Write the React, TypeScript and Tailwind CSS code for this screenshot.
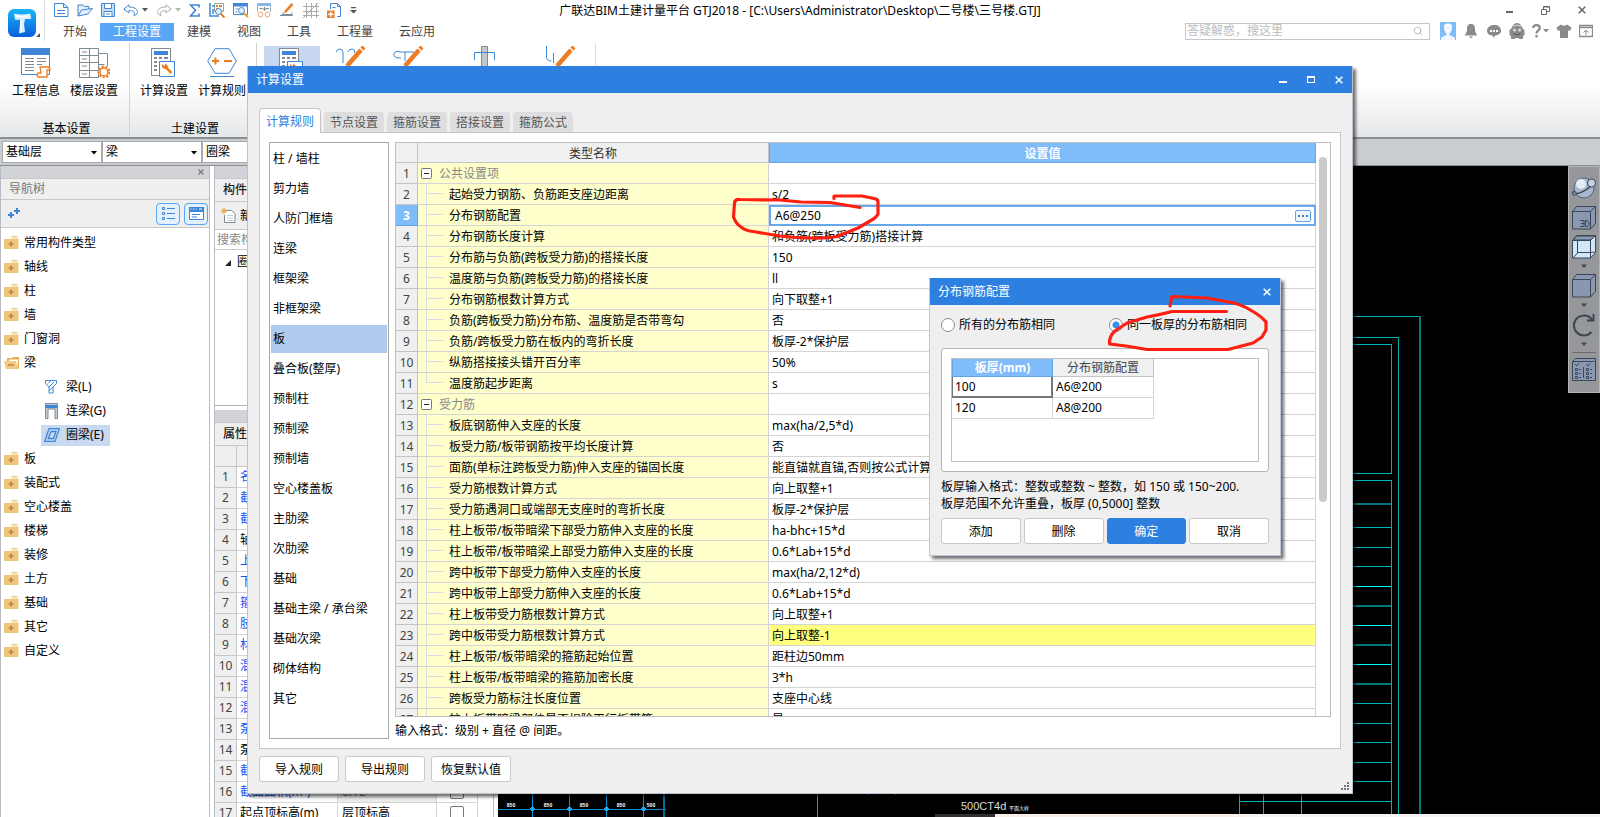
import React from 'react';
import { Search } from 'lucide-react';

const BLUE = '#3f86d6';
const ORANGE = '#ee7c22';
const GRAY = '#7f8a93';

const menuTabs = ['开始', '工程设置', '建模', '视图', '工具', '工程量', '云应用'];

const navTop = ['常用构件类型', '轴线', '柱', '墙', '门窗洞'];
const navBottom = ['板', '装配式', '空心楼盖', '楼梯', '装修', '土方', '基础', '其它', '自定义'];

const properties: { name: string; value?: string; dark?: boolean }[] = [
  { name: '名称', value: 'QL-1' },
  { name: '截面宽度(mm)', value: '240' },
  { name: '截面高度(mm)', value: '240' },
  { name: '轴线距梁左边...', value: '(120)', dark: true },
  { name: '上部钢筋', value: '2A12' },
  { name: '下部钢筋', value: '2A12' },
  { name: '箍筋', value: 'A6@200' },
  { name: '肢数', value: '2' },
  { name: '材质', value: '现浇混凝土' },
  { name: '混凝土类型' },
  { name: '混凝土强度等级' },
  { name: '混凝土外加剂' },
  { name: '泵送类型' },
  { name: '泵送高度(m)', dark: true },
  { name: '截面周长(m)', value: '1.4' },
  { name: '截面面积(m²)', value: '0.12' },
  { name: '起点顶标高(m)', value: '层顶标高', dark: true },
];

const categories = [
  '柱 / 墙柱', '剪力墙', '人防门框墙', '连梁', '框架梁', '非框架梁', '板', '叠合板(整厚)', '预制柱', '预制梁',
  '预制墙', '空心楼盖板', '主肋梁', '次肋梁', '基础', '基础主梁 / 承台梁', '基础次梁', '砌体结构', '其它',
];

const dialogTabs = ['计算规则', '节点设置', '箍筋设置', '搭接设置', '箍筋公式'];

interface Rule {
  name: string;
  value?: string;
  group?: boolean;
  last?: boolean;
}

const rules: Rule[] = [
  { name: '公共设置项', group: true },
  { name: '起始受力钢筋、负筋距支座边距离', value: 's/2' },
  { name: '分布钢筋配置', value: 'A6@250' },
  { name: '分布钢筋长度计算', value: '和负筋(跨板受力筋)搭接计算' },
  { name: '分布筋与负筋(跨板受力筋)的搭接长度', value: '150' },
  { name: '温度筋与负筋(跨板受力筋)的搭接长度', value: 'll' },
  { name: '分布钢筋根数计算方式', value: '向下取整+1' },
  { name: '负筋(跨板受力筋)分布筋、温度筋是否带弯勾', value: '否' },
  { name: '负筋/跨板受力筋在板内的弯折长度', value: '板厚-2*保护层' },
  { name: '纵筋搭接接头错开百分率', value: '50%' },
  { name: '温度筋起步距离', value: 's', last: true },
  { name: '受力筋', group: true },
  { name: '板底钢筋伸入支座的长度', value: 'max(ha/2,5*d)' },
  { name: '板受力筋/板带钢筋按平均长度计算', value: '否' },
  { name: '面筋(单标注跨板受力筋)伸入支座的锚固长度', value: '能直锚就直锚,否则按公式计算' },
  { name: '受力筋根数计算方式', value: '向上取整+1' },
  { name: '受力筋遇洞口或端部无支座时的弯折长度', value: '板厚-2*保护层' },
  { name: '柱上板带/板带暗梁下部受力筋伸入支座的长度', value: 'ha-bhc+15*d' },
  { name: '柱上板带/板带暗梁上部受力筋伸入支座的长度', value: '0.6*Lab+15*d' },
  { name: '跨中板带下部受力筋伸入支座的长度', value: 'max(ha/2,12*d)' },
  { name: '跨中板带上部受力筋伸入支座的长度', value: '0.6*Lab+15*d' },
  { name: '柱上板带受力筋根数计算方式', value: '向上取整+1' },
  { name: '跨中板带受力筋根数计算方式', value: '向上取整-1' },
  { name: '柱上板带/板带暗梁的箍筋起始位置', value: '距柱边50mm' },
  { name: '柱上板带/板带暗梁的箍筋加密长度', value: '3*h' },
  { name: '跨板受力筋标注长度位置', value: '支座中心线' },
  { name: '柱上板带暗梁部位是否扣除平行板带筋', value: '是' },
];

const EDITING_ROW = 2;
const CHANGED_ROW = 22;

const Caret = ({ className = 'text-[#555]' }: { className?: string }) => (
  <svg width="6" height="4" viewBox="0 0 6 4" className={`shrink-0 ${className}`}>
    <path d="M0 0h6L3 3.5z" fill="currentColor" />
  </svg>
);

const Cross = ({ size = 8, width = 1.5 }: { size?: number; width?: number }) => (
  <svg width={size} height={size} viewBox="0 0 8 8">
    <path d="M.7.7l6.6 6.6M7.3.7L.7 7.3" stroke="currentColor" strokeWidth={width} />
  </svg>
);

const AppLogo = () => (
  <svg width="28" height="28" viewBox="0 0 28 28">
    <defs>
      <linearGradient id="logo" x1="0" y1="0" x2="0" y2="1">
        <stop offset="0" stopColor="#18b4fa" />
        <stop offset="1" stopColor="#0a5fd8" />
      </linearGradient>
    </defs>
    <rect width="28" height="28" rx="6" fill="url(#logo)" />
    <path d="M6 4.500q8 2 16 0l1.500 5q-3.500.8-6.500.5l-1 5 1 8-6 1.500 1-9V10.500q-3 .5-5 0z" fill="#d9f0ff" />
    <path d="M8 7q6 1.500 12 0M13 12v10" stroke="#fff" strokeWidth="1.500" fill="none" />
  </svg>
);

const QuickIcons = () => (
  <div className="flex w-[320px] shrink-0 items-center pb-0.5 pl-[9px]">
    <div className="flex items-center gap-2">
      <svg width="15" height="14" viewBox="0 0 15 14" fill="none" stroke={BLUE}>
        <path d="M.5.5h9l4.500 4v9H.5zM9.500.5v4H14M3 7.500h8M3 10.500h8" />
      </svg>
      <svg width="16" height="14" viewBox="0 0 16 14" fill="#e3effb" stroke={BLUE}>
        <path d="M1 13V2h5l1.500 1.500H12V6M1 13l3.500-6 11-1.500L11 11z" />
      </svg>
      <svg width="14" height="14" viewBox="0 0 14 14" fill="#c8e0f8" stroke={BLUE}>
        <path d="M.5.5h13v13H.5z" />
        <path d="M3.500.5h7v5h-7zM3 8.500h8v5H3zM5 11h4" fill="#fff" />
      </svg>
      <div className="flex items-center gap-[3px]">
        <svg width="16" height="13" viewBox="0 0 16 13" fill="none" stroke={BLUE}>
          <path d="M6 .8L.8 5 6 9V6.500c4 0 6.500 1 5 5.500 6-3 4-9-5-9z" />
        </svg>
        <Caret />
      </div>
      <div className="flex items-center gap-[3px]">
        <svg width="16" height="13" viewBox="0 0 16 13" fill="none" stroke="#aaa">
          <path d="M10 .8L15.200 5 10 9V6.500c-4 0-6.500 1-5 5.500-6-3-4-9 5-9z" />
        </svg>
        <Caret className="text-[#b5b5b5]" />
      </div>
      <svg width="12" height="13" viewBox="1 0 12 13" fill="none" stroke={BLUE} strokeWidth="1.600">
        <path d="M11 3.500V1H2.500l5 5.300L2.500 12H11V9.500" />
      </svg>
      <svg width="16" height="15" viewBox="0 0 16 15" fill="none">
        <path d="M1 0v13h9M4 11V6M4 2v2" stroke={BLUE} strokeWidth="1.500" />
        <path d="M5.500.5h9v8h-9z" stroke="#8aa" />
        <path d="M7 2h2v2H7zM10 2h3v2h-3zM7 5h2v2H7z" fill={ORANGE} />
        <circle cx="9.500" cy="8.500" r="3" fill="#eaf3fc" stroke={BLUE} />
        <path d="M11.500 10.500l4 4" stroke={ORANGE} strokeWidth="2" />
      </svg>
      <svg width="16" height="15" viewBox="0 0 16 15" fill="none">
        <path d="M.5.5h14v11H.5z" stroke={BLUE} />
        <path d="M0 0h15v3.500H0z" fill={BLUE} />
        <path d="M2.500 6h3M2.500 9h2" stroke={GRAY} />
        <circle cx="8.500" cy="7.500" r="3" fill="#eaf3fc" stroke={BLUE} />
        <path d="M10.500 10l4.500 4" stroke="#f0a030" strokeWidth="2.200" />
      </svg>
      <svg width="15" height="15" viewBox="0 0 15 15" fill="none">
        <path d="M.5 9V.5h13V9" stroke="#9db3c8" />
        <path d="M0 0h14v3H0z" fill="#8bb7e6" />
        <path d="M2.500 5.500h3M9 5.500h3M7.500 4v4M5.500 6h4" stroke={GRAY} />
        <circle cx="3.500" cy="11.500" r="2.400" stroke="#f0a070" />
        <circle cx="10.500" cy="11.500" r="2.400" stroke="#f0a070" />
      </svg>
      <svg width="15" height="14" viewBox="0 0 15 14" fill="none">
        <path d="M12.500.8L5 9.200" stroke={ORANGE} strokeWidth="2.500" />
        <path d="M4.500 9L2 11.500h10v-2M0 12.500h13" stroke={GRAY} />
      </svg>
      <svg width="16" height="15" viewBox="0 0 16 15" fill="none" stroke="#aaa">
        <path d="M3.500 0v15M8.500 0v15M13.500 0v15M0 3.500h16M0 8.500h16M0 12.500h16M0 15L15 0" />
      </svg>
      <svg width="15" height="15" viewBox="0 0 15 15" fill="none">
        <path d="M3.500 6V.5h7l3 3v10H10M10.500.5v3h3M5.500 4.500h3" stroke={BLUE} />
        <path d="M0 7.500h7.500V15H0z" fill={ORANGE} />
        <path d="M3.800 8.800v5M1.300 11.300h5" stroke="#fff" strokeWidth="1.500" />
      </svg>
      <svg width="7" height="7" viewBox="0 0 7 7" fill="#555">
        <path d="M1 0h5v1.200H1zM0 3h7L3.500 6.500z" />
      </svg>
    </div>
  </div>
);

const AccountIcons = () => (
  <div className="flex items-center gap-[7px] text-[#8a8a8a]">
    <svg width="16" height="18" viewBox="0 0 16 18">
      <path d="M0 0h16v18H0z" fill="#7fbcfa" />
      <path d="M4 3q4-3.500 8 0v4q-1 4-2.500 4.500v1.500L15 15.500V18H1v-2.500l5.500-2.500v-1.500Q5 11 4 7z" fill="#f2f8ff" />
    </svg>
    <svg width="16" height="16" viewBox="0 0 16 16" fill="currentColor">
      <path d="M8 1c3 0 4 2 4 5 0 4 2 5 2 6.500H2C2 11 4 10 4 6c0-3 1-5 4-5zM6 13.500h4L8 15.500z" />
    </svg>
    <svg width="16" height="16" viewBox="0 0 16 16">
      <path d="M8 2c4 0 7 2 7 5.500S12 12 9.500 12.500L7 15v-2.500C3 12.500 1 10.500 1 7.500S4 2 8 2z" fill="currentColor" />
      <path d="M4 7h2v2H4zM7 7h2v2H7zM10 7h2v2h-2z" fill="#fff" />
    </svg>
    <svg width="16" height="17" viewBox="0 0 16 17">
      <path d="M3 4q2-4 5-4t5 4l1 2 1.500 1v5l-1.500 1v3h-4v-1h-4v1H2v-3L.5 12V7L2 6z" fill="currentColor" />
      <path d="M4 3.500q4-3 8 0" stroke="#ddd" fill="none" />
      <circle cx="5.500" cy="7" r="1.500" fill="#ddd" />
      <circle cx="10.500" cy="7" r="1.500" fill="#ddd" />
      <path d="M4.500 10.500q3.500 3 7 0" stroke="#555" fill="none" />
    </svg>
    <span className="flex items-center gap-0.5">
      <svg width="9" height="14" viewBox="0 0 9 14" fill="none" stroke="currentColor" strokeWidth="2.200">
        <path d="M1.200 4Q1.200 1.200 4.500 1.200T7.800 4c0 2.500-3.300 2.500-3.300 5.500M4.500 11v2.500" />
      </svg>
      <Caret className="text-[#8a8a8a]" />
    </span>
    <svg width="16" height="14" viewBox="0 0 16 14" fill="currentColor">
      <path d="M5 .5Q8 3 11 .5l4.500 3L14 7l-2-.8V14H4V6.200L2 7 .5 3.500z" />
    </svg>
    <svg width="14" height="14" viewBox="0 0 14 14" fill="none" stroke="currentColor">
      <path d="M.5 1.500h13v11H.5zM.5 3.500h13" strokeWidth="1.300" />
      <path d="M7 11V6M4.500 8.500L7 6l2.500 2.500" />
    </svg>
  </div>
);

const Header = () => (
  <header className="flex h-[41px] shrink-0 bg-white">
    <div className="relative flex w-[45px] shrink-0 items-center justify-center border-r border-[#ddd] pt-1">
      <AppLogo />
      <svg width="4" height="4" className="absolute right-1 bottom-1">
        <path d="M4 0v4H0z" fill="#555" />
      </svg>
    </div>
    <div className="flex min-w-0 flex-1 flex-col">
      <div className="flex h-[22px] shrink-0">
        <QuickIcons />
        <h1 className="min-w-0 flex-1 truncate pt-[3px] text-center text-xs leading-4 text-black">
          广联达BIM土建计量平台 GTJ2018 - [C:\Users\Administrator\Desktop\二号楼\三号楼.GTJ]
        </h1>
        <div className="flex w-[365px] shrink-0 items-center justify-end gap-7 pr-3.5 pb-0.5 text-[#666]">
          <button aria-label="最小化" className="mt-1 h-0.5 w-[7px] bg-[#666]" />
          <button aria-label="还原">
            <svg width="9" height="9" viewBox="0 0 9 9" fill="none" stroke="currentColor">
              <path d="M.5 3.500h5v5h-5zM2.500 3V.5h6v5H6M2.500 1h6" />
            </svg>
          </button>
          <button aria-label="关闭"><Cross /></button>
        </div>
      </div>
      <nav className="flex flex-1 items-end border-b border-[#d4d4d4] pl-[5px] text-xs leading-4">
        {menuTabs.map((tab) => (
          <button
            key={tab}
            className={`px-[13px] py-px ${tab === '工程设置' ? 'bg-[#5aa5f6] text-white' : 'text-[#444]'}`}
          >
            {tab}
          </button>
        ))}
        <div className="ml-auto flex items-center gap-[10px] pr-[7px] pb-px">
          <label className="flex h-[17px] w-[245px] items-center border border-[#c6c6c6] pr-1.5">
            <input
              aria-label="搜索"
              placeholder="答疑解惑，搜这里"
              className="h-4 min-w-0 flex-1 pb-0.5 pl-px text-xs leading-3 outline-none placeholder:text-[#bbb]"
            />
            <Search className="h-2.5 w-2.5 text-[#b0b0b0]" />
          </label>
          <AccountIcons />
        </div>
      </nav>
    </div>
  </header>
);

const InfoIcon = () => (
  <svg width="30" height="30" viewBox="0 0 30 30" fill="none">
    <path d="M.5.5h28v26H.5z" stroke={BLUE} />
    <path d="M0 0h29v7H0z" fill={BLUE} />
    <path d="M4 10.500h9M16 10.500h9M4 13.500h9M16 13.500h9M4 16.500h9M4 19.500h9M4 22.500h9M16 16.500h5" stroke={GRAY} />
    <path d="M19 19h8q2 0 2 3h-3v7h-9q-2-2 0-4h3z" stroke={ORANGE} strokeWidth="1.300" fill="#fff" />
  </svg>
);

const FloorIcon = () => (
  <svg width="31" height="30" viewBox="0 0 31 30" fill="none" stroke={GRAY}>
    <path d="M.5.5h19v29H.5zM10.500.5v29M.5 7.500h19M.5 14.500h19M.5 22.500h19M19.500 5.500h9V18M19.500 16.500h6" />
    <path d="M3 4h5M3 11h5M3 18h5M3 26h5" />
    <circle cx="25" cy="24" r="5.500" stroke={ORANGE} strokeWidth="2" strokeDasharray="2.300 1.500" fill="#fff" />
    <circle cx="25" cy="24" r="4" stroke={ORANGE} strokeWidth="1.500" fill="#fff" />
  </svg>
);

const CalcIcon = () => (
  <svg width="26" height="30" viewBox="0 0 26 30" fill="none">
    <path d="M.5.500h19v27H.5z" stroke={GRAY} fill="#fff" />
    <path d="M3 3h14v4H3z" fill={BLUE} />
    <path d="M3 9h3v2H3zM8 9h3v2H8zM13 9h4v2h-4zM3 13h3v2H3zM8 13h3v2H8zM3 17h3v2H3zM3 21h3v2H3zM13 13h4v2h-4z" fill={GRAY} />
    <path d="M8.500 13.500h15v15h-15z" stroke={BLUE} fill="#fff" />
    <path d="M14 18.500l6.500 6.500" stroke={ORANGE} strokeWidth="2.500" />
    <path d="M11 16v3l2.500 2h3l.5-3-2.500-2.500-1 2.500z" fill={ORANGE} />
  </svg>
);

const RuleIcon = () => (
  <svg width="30" height="30" viewBox="0 0 30 30" fill="none">
    <path d="M8 .7h14L29.300 13 22 25.300H8L.7 13zM3 28.500h24" stroke={BLUE} />
    <path d="M5 13h7M8.500 9.500v7M17 13h8" stroke={ORANGE} strokeWidth="2" />
  </svg>
);

const Pencil = () => <path d="M11 20L25 4M26 3l2-2" stroke={ORANGE} strokeWidth="4.500" />;

const RibbonButton = ({ label, children }: { label: string; children: React.ReactNode }) => (
  <button className="flex w-14 flex-col items-center gap-1 text-xs leading-[18px] text-black">
    {children}
    <span className="whitespace-nowrap">{label}</span>
  </button>
);

const Ribbon = () => (
  <section className="flex h-[98px] shrink-0 border-b-2 border-[#8c8f92] bg-linear-to-b from-white from-45% to-[#e4e7e9] pt-0.5">
    <div className="flex w-[129px] shrink-0 flex-col justify-between pl-2">
      <div className="flex gap-0.5 pt-[5px]">
        <RibbonButton label="工程信息"><InfoIcon /></RibbonButton>
        <RibbonButton label="楼层设置"><FloorIcon /></RibbonButton>
      </div>
      <span className="pr-1 text-center text-xs leading-4 text-black">基本设置</span>
    </div>
    <div className="flex w-32 shrink-0 flex-col justify-between border-x border-[#d2d2d2] pl-1.5">
      <div className="flex gap-0.5 pt-[5px]">
        <RibbonButton label="计算设置"><CalcIcon /></RibbonButton>
        <RibbonButton label="计算规则"><RuleIcon /></RibbonButton>
      </div>
      <span className="pr-0.5 text-center text-xs leading-4 text-black">土建设置</span>
    </div>
    <div className="mb-0.5 flex w-[339px] shrink-0 gap-4 border-r border-[#dedede] pt-[3px] pl-[7px]">
      <button aria-label="钢筋计算设置" className="flex w-14 justify-center bg-[#c8d8f0] pt-0.5">
        <CalcIcon />
      </button>
      <svg width="30" height="30" viewBox="0 0 30 30" fill="none">
        <path d="M0 6q1-3 4-3t3 4v10M12 6q1-3 4-3t3 4" stroke={BLUE} />
        <Pencil />
      </svg>
      <svg width="56" height="30" viewBox="-12 0 56 30" fill="none">
        <path d="M7 12Q-1 12 0 8t6-2h14M11 6v9" stroke={BLUE} />
        <Pencil />
      </svg>
      <svg width="54" height="30" viewBox="-20 0 54 30" fill="none">
        <path d="M7.500.5h6v28h-6z" fill="#c3c8cc" stroke={GRAY} />
        <path d="M.5 14V6.500h20V14" stroke={BLUE} />
      </svg>
      <svg width="56" height="30" viewBox="-22 0 56 30" fill="none">
        <path d="M.5 0v11q0 4 5 4M7.500 7v10" stroke={BLUE} />
        <Pencil />
      </svg>
    </div>
  </section>
);

const ToolbarSelect = ({ label, value }: { label: string; value: string }) => (
  <div className="relative h-[22px] w-[100px] border border-[#aaa] bg-white">
    <select aria-label={label} className="h-full w-full appearance-none pl-[3px] text-xs leading-4 text-black outline-none">
      <option>{value}</option>
    </select>
    <Caret className="pointer-events-none absolute top-[9px] right-1" />
  </div>
);

const FolderIcon = () => (
  <svg width="15" height="14" viewBox="0 0 15 14">
    <path d="M7 1.500L8.500 0H13l1 1.500zM0 3h7l1-.5h6.500V13H0z" fill="#edc77d" />
    <path d="M7 5.500v5M4.500 8h5" stroke="#bd8534" strokeWidth="1.600" />
  </svg>
);

const NavItem = ({ name, open }: { name: string; open?: boolean }) => (
  <li className="flex h-6 items-center gap-[5px] pl-[3px]">
    {open ? (
      <svg width="15" height="14" viewBox="0 0 15 14">
        <path d="M3 2h5l1-1h6v12H3z" fill="#e2ae58" />
        <path d="M5 3.500h9V9H5z" fill="#fff" />
        <path d="M0 5h12l2.500 8H2z" fill="#efcb87" />
        <path d="M4 9h6" stroke="#bd8534" strokeWidth="1.500" />
      </svg>
    ) : (
      <FolderIcon />
    )}
    {name}
  </li>
);

const NavTree = () => (
  <aside className="flex w-[210px] shrink-0 flex-col border-x border-[#b9bcc4] bg-white">
    <div className="flex h-3 items-center justify-end bg-[#d1d3d9] pr-[5px] text-[#777]">
      <button aria-label="关闭导航树"><Cross size={6} width={1.6} /></button>
    </div>
    <h2 className="h-[22px] border-y border-[#c6c8cc] bg-[#efefef] pl-2 text-xs leading-5 text-[#777]">导航树</h2>
    <div className="flex h-7 items-center border-b border-[#c6c8cc] bg-[#efefef] pr-px pl-[7px]">
      <svg width="12" height="11" viewBox="0 0 12 11" stroke={BLUE} strokeWidth="2">
        <path d="M0 7h6M3 4v6M6 3h6M9 0v6" />
      </svg>
      <div className="ml-auto flex gap-1">
        <button aria-label="列表" className="flex h-[22px] w-6 items-center justify-center rounded-sm border border-[#5aa5f6] bg-[#e3f0fd]">
          <svg width="13" height="14" viewBox="0 0 13 14" fill="none" stroke={BLUE}>
            <path d="M.5.5h2v2h-2zM.5 5.500h2v2h-2zM.5 10.500h2v2h-2zM5 1.500h8M5 6.500h8M5 11.500h8" />
          </svg>
        </button>
        <button aria-label="面板" className="flex h-[22px] w-6 items-center justify-center rounded-sm border border-[#5aa5f6] bg-[#e3f0fd]">
          <svg width="15" height="13" viewBox="0 0 15 13" fill="none">
            <path d="M.5.5h14v12H.5z" fill="#fff" stroke={BLUE} />
            <path d="M0 0h15v5H0z" fill={BLUE} />
            <path d="M2 1.500v1M4.500 1.500v1M7 1.500v1M10 2h3" stroke="#fff" />
            <path d="M3 7.500h8M3 10h5" stroke={BLUE} />
          </svg>
        </button>
      </div>
    </div>
    <ul className="flex-1 overflow-hidden pt-[3px] text-xs text-black">
      {navTop.map((name) => <NavItem key={name} name={name} />)}
      <NavItem name="梁" open />
      <li className="flex h-6 items-center gap-2 pl-[44px]">
        <svg width="13" height="14" viewBox="0 0 13 14" fill="none" stroke={BLUE}>
          <path d="M.5.5h11v3L8 7v6H4V7L.5 3.500zM3 3.500l3-3M4 7l5-5M4 11l4-4" />
        </svg>
        梁(L)
      </li>
      <li className="flex h-6 items-center gap-2 pl-[44px]">
        <svg width="13" height="16" viewBox="0 0 13 16" fill="none">
          <path d="M.5.5h12v15H10V6H3v9.500H.5z" fill="#c5ccd2" stroke={GRAY} />
          <path d="M1 2h11v3H1z" fill={BLUE} />
        </svg>
        连梁(G)
      </li>
      <li className="flex h-6 items-center pl-10">
        <span className="flex h-[21px] items-center gap-1.5 bg-[#c8d9f0] pr-1.5 pl-[3px]">
          <svg width="16" height="14" viewBox="0 0 16 14" fill="none" stroke={BLUE} strokeWidth="1.300">
            <path d="M5 .7h10.300L11 13.300H.7zM7 3.500h5L9.500 10.500H4.200z" />
          </svg>
          圈梁(E)
        </span>
      </li>
      {navBottom.map((name) => <NavItem key={name} name={name} />)}
    </ul>
  </aside>
);

const ComponentPanels = () => (
  <section className="flex w-[280px] shrink-0 flex-col border-x border-[#b9bcc4] bg-white text-xs text-black">
    <div className="h-3 shrink-0 bg-[#d1d3d9]" />
    <h2 className="h-6 shrink-0 border-y border-[#c6c8cc] bg-[#efefef] pl-2 leading-[22px] font-medium text-[#222]">构件列表</h2>
    <div className="flex h-7 shrink-0 items-center gap-1 border-b border-[#c6c8cc] bg-[#efefef] pl-1.5">
      <svg width="15" height="15" viewBox="0 0 15 15" fill="none">
        <path d="M4.500 2.500h6l3.500 3v9H3.500V7" fill="#fff" stroke={GRAY} />
        <path d="M6 7.500h6M6 10h6M6 12.500h6" stroke="#c8ccd0" />
        <path d="M3 0v6M0 3h6M1 1l4 4M5 1L1 5" stroke="#f0a030" />
      </svg>
      新建
    </div>
    <input aria-label="搜索构件" placeholder="搜索构件..." className="h-5 shrink-0 border-b border-[#c6c8cc] pl-0.5 placeholder:text-[#888]" />
    <div className="flex h-[156px] shrink-0 items-start gap-1.5 border-b border-[#b5b5b5] pt-1 pl-2.5 leading-4">
      <svg width="6" height="6" className="mt-1.5"><path d="M6 0v6H0z" fill="#222" /></svg>
      圈梁
    </div>
    <div className="h-1 shrink-0" />
    <div className="h-3 shrink-0 bg-[#d1d3d9]" />
    <h2 className="h-6 shrink-0 border-y border-[#c6c8cc] bg-[#efefef] pl-2 leading-[22px] font-medium text-[#222]">属性列表</h2>
    <div className="min-h-0 flex-1 overflow-hidden">
      <table className="w-[263px] table-fixed border-separate border-spacing-0 leading-4">
        <colgroup>
          <col className="w-[22px]" />
          <col className="w-[101px]" />
          <col className="w-[99px]" />
          <col />
        </colgroup>
        <thead>
          <tr className="bg-[#efefef]">
            {['', '属性名称', '属性值', '附加'].map((head) => (
              <th key={head} className="h-[21px] border-r border-b border-[#c6c6c6] p-0 font-normal">{head}</th>
            ))}
          </tr>
        </thead>
        <tbody>
          {properties.map((prop, i) => (
            <tr key={prop.name}>
              <td className="h-[21px] border-r border-b border-[#c6c6c6] bg-[#efefef] p-0 text-center text-[#444]">{i + 1}</td>
              <td className={`truncate border-r border-b border-[#d4d4d4] p-0 pl-[3px] ${prop.dark ? 'text-black' : 'text-[#1454f0]'}`}>
                {prop.name}
              </td>
              <td className={`border-r border-b border-[#d4d4d4] p-0 pl-1 ${i === 15 ? 'bg-[#ececec] text-[#777]' : ''}`}>{prop.value}</td>
              <td className="border-r border-b border-[#d4d4d4] p-0">
                <input
                  type="checkbox"
                  aria-label={`附加 ${prop.name}`}
                  className="mx-auto block h-3.5 w-3.5 appearance-none rounded-xs border border-[#777] bg-white"
                />
              </td>
            </tr>
          ))}
        </tbody>
      </table>
    </div>
  </section>
);

const gridLines = [
  [338, '#00787a', 2], [361, '#00b4b4', 1], [381, '#00b4b4', 1], [400, '#00b4b4', 1], [420, '#00ffff', 1],
  [440, '#00787a', 2], [459, '#00ffff', 1], [479, '#00787a', 2], [498, '#00ffff', 1], [518, '#00787a', 2],
  [537, '#00b4b4', 1], [557, '#00b4b4', 1], [576, '#00b4b4', 1], [596, '#00b4b4', 1], [615, '#00b4b4', 1],
] as const;

const dimensions = [
  [13, '850'], [50, '850'], [86, '850'], [123, '850'], [153, '500'],
] as const;

const DrawingCanvas = () => (
  <main className="relative min-w-0 flex-1 overflow-hidden bg-black">
    <svg className="h-full w-full" fill="none" shapeRendering="crispEdges">
      <g stroke="#00b4b4">
        <path d="M700 178.500h193.500V308" />
        <path d="M700 171.500h200.500V648" />
        <path d="M700 307.500h193.500M700 314.500h193.500V648" />
        <path d="M741 635.500h152.500M741.500 620v28M765.500 620v28M803.500 620v28" />
      </g>
      <path d="M700 150.500h222" stroke="#00b4b4" />
      <path d="M922 150v498" stroke="#007c7c" strokeWidth="2" />
      {gridLines.map(([y, color, width]) => (
        <path key={y} d={`M700 ${width === 2 ? y : y + 0.5}h193`} stroke={color} strokeWidth={width} />
      ))}
      <path d="M0 643.500h168M34.500 620v31M71.500 620v31M108.500 620v31M145.500 620v31" stroke="#0a8fd0" />
      <path d="M166 620v31" stroke="#0b6a95" strokeWidth="2" />
      <path d="M32 643l2.500-3 2.500 3-2.500 3zM69 643l2.500-3 2.500 3-2.500 3zM106 643l2.500-3 2.500 3-2.500 3zM143 643l2.500-3 2.500 3-2.500 3z" fill="#18a8f0" />
      <path d="M319.500 620v31" stroke="#8c8c00" />
      <path d="M370.500 620v9M397.500 620v9" stroke="#0a8fd0" />
      {dimensions.map(([x, label]) => (
        <text key={x} x={x} y="641" fill="#fff" textAnchor="middle" className="font-['Liberation_Sans',sans-serif] text-[5px] font-bold">
          {label}
        </text>
      ))}
      <text x="463" y="644" fill="#ddd" className="font-['Liberation_Sans',sans-serif] text-[11px]">500CT4d</text>
      <text x="511" y="644" fill="#fff" className="font-['Noto_Sans_CJK_SC',sans-serif] text-[5px]">平面大样</text>
    </svg>
    <div className="absolute right-0 bottom-0 left-[437px] flex h-[3px]">
      <div className="w-[60px] bg-[#332f31]" />
      <div className="w-[250px] bg-[#f7efe8]" />
      <div className="flex-1 bg-[#f4f4f4]" />
    </div>
    <ViewToolbar />
  </main>
);

const Cube = ({ children, light }: { children?: React.ReactNode; light?: boolean }) => (
  <svg width="24" height="24" viewBox="0 0 24 24" stroke="#3c4654" fill="none">
    <path d="M.5 5.500l4-5h19v17l-5 5.500H.5z" fill={light ? '#d3e7fb' : '#8798b0'} />
    <path d="M.5 5.500h18V23M18.500 5.500l5-5" />
    {children}
  </svg>
);

const ViewToolbar = () => (
  <div className="absolute top-0 right-0 flex h-[227px] w-8 flex-col items-center border border-[#b4b4b6] bg-[#95979b] pt-[9px] text-[#3c4654]">
    <svg width="24" height="24" viewBox="0 0 24 24" stroke="#3c4654">
      <circle cx="12" cy="12" r="10" fill="#a9b8cc" stroke="#56657a" />
      <circle cx="9" cy="8" r="5" fill="#e4ecf5" stroke="none" />
      <path d="M1 18q-1-1 1-3M3 18q8-1 16-8" fill="none" strokeWidth="1.500" />
      <circle cx="19.500" cy="7" r="4" fill="#c8d4e2" />
      <circle cx="2.500" cy="17.500" r="1.800" fill="#8798b0" />
    </svg>
    <div className="mt-1.5 flex flex-col items-center gap-[5px]">
      <Cube>
        <path d="M8 14.500h4v6H8M9 17.500h3M13.500 14.500h2l1.500 2v2l-1.500 2h-2z" />
      </Cube>
      <Cube light>
        <path d="M1 5l4-4h18l-4 4z" fill="#8798b0" />
        <path d="M5.500 6v12L1 23M5.500 17.500h13l5-.5" />
      </Cube>
      <Caret className="h-[5px] text-[#3c4654]" />
      <Cube />
      <Caret className="h-[5px] text-[#3c4654]" />
      <svg width="24" height="24" viewBox="0 0 24 24" fill="none" stroke="currentColor" strokeWidth="2">
        <path d="M19.500 19A10 10 0 1 1 20 6.500M21.500 1v6.500H15" />
      </svg>
      <Caret className="h-[5px] text-[#3c4654]" />
    </div>
    <div className="my-[5px] h-px w-6 bg-[#6b6d70]" />
    <svg width="24" height="24" viewBox="0 0 24 24" fill="none" stroke="#3c4654">
      <path d="M.5 3.500l3-3h20v22H.5zM.5 3.500h22" fill="#8798b0" />
      <path d="M3 6l2 2 2-3M14 6l2 2 2-3M3.500 10.500h2v2h-2zM3.500 14.500h2v2h-2zM3.500 18.500h2v2h-2zM14.500 10.500h2v2h-2zM14.500 14.500h2v2h-2zM14.500 18.500h2v2h-2zM7 11.500h2M7 15.500h2M7 19.500h2M18 11.500h2M18 15.500h2M18 19.500h2M11.500 9v11" />
    </svg>
  </div>
);

const RuleRow = ({ rule, index }: { rule: Rule; index: number }) => {
  const editing = index === EDITING_ROW;
  return (
    <tr>
      <td
        className={`h-[21px] border-r border-b p-0 pt-0.5 text-center ${
          editing ? 'border-[#62a4ea] bg-[#80bbfa] font-bold text-white' : 'border-[#c4c4c4] bg-[#f0f0f0] text-[#444]'
        }`}
      >
        {index + 1}
      </td>
      <td className="border-r border-b border-[#d4d4d4] bg-[#ffffcc] p-0 pl-[3px]">
        <div className={`flex h-5 items-center whitespace-nowrap ${rule.group ? 'gap-[7px] text-[#888]' : 'gap-1 text-black'}`}>
          {rule.group ? (
            <svg width="11" height="11" viewBox="0 0 11 11" fill="none" stroke="#777">
              <rect x=".5" y=".5" width="10" height="10" rx="1" fill="#fff" />
              <path d="M3 5.500h5" stroke="#222" />
            </svg>
          ) : (
            <svg width="24" height="20" viewBox="0 0 24 20" fill="none" stroke="#d9dae4">
              <path d={`M5.500 0v${rule.last ? 10 : 20}M5.500 9.500H22`} />
            </svg>
          )}
          <span className="pt-0.5">{rule.name}</span>
        </div>
      </td>
      {editing ? (
        <td className="border-2 border-[#68a7ea] p-0">
          <div className="flex h-[17px] items-center pr-[3px] pl-1">
            <input aria-label={rule.name} defaultValue={rule.value} className="min-w-0 flex-1 leading-4 text-black outline-none" />
            <button aria-label="更多" className="flex h-3 w-4 items-center justify-center rounded-xs border border-[#62a4ea] bg-[#f0f6fc]">
              <svg width="10" height="2" fill="#3f86d6"><path d="M0 0h2v2H0zM4 0h2v2H4zM8 0h2v2H8z" /></svg>
            </button>
          </div>
        </td>
      ) : (
        <td className={`border-r border-b border-[#d4d4d4] p-0 pt-0.5 pl-[3px] text-black ${index === CHANGED_ROW ? 'bg-[#ffff80]' : ''}`}>
          {rule.value}
        </td>
      )}
    </tr>
  );
};

const PlainButton = ({ children, primary }: { children: React.ReactNode; primary?: boolean }) => (
  <button
    className={`h-[26px] w-20 rounded-[3px] border pt-px text-xs ${
      primary ? 'border-[#2d7fe0] bg-[#2d7fe0] text-white' : 'border-[#c9c9c9] bg-white text-black'
    }`}
  >
    {children}
  </button>
);

const SettingsDialog = () => (
  <section
    role="dialog"
    aria-label="计算设置"
    className="absolute inset-x-[247px] top-[66px] bottom-[23px] flex flex-col border border-t-0 border-[#bcc3cf] bg-[#efefef] text-xs leading-4 shadow-[3px_3px_3px_rgba(0,0,0,0.55)]"
  >
    <header className="flex h-[27px] shrink-0 items-center bg-[#2d7fe0] pr-[9px] pl-2 text-white">
      <h2 className="flex-1">计算设置</h2>
      <div className="flex items-center gap-5">
        <button aria-label="最小化" className="mt-1 h-0.5 w-2 bg-white" />
        <button aria-label="最大化" className="h-[7px] w-2 border border-t-2 border-white" />
        <button aria-label="关闭"><Cross /></button>
      </div>
    </header>

    <div className="flex shrink-0 items-end gap-[3px] px-[11px] pt-[15px]">
      {dialogTabs.map((tab, i) =>
        i === 0 ? (
          <button key={tab} className="relative -mb-px h-[25px] w-[62px] rounded-t-sm border border-b-0 border-[#c4c6cc] bg-white pt-px text-[#2d7fe0]">
            {tab}
          </button>
        ) : (
          <button key={tab} className="h-5 w-[60px] rounded-t-sm bg-[#dedede] pt-0.5 text-[#555]">
            {tab}
          </button>
        ),
      )}
    </div>

    <div className="mx-[11px] flex min-h-0 flex-1 gap-1.5 border border-[#c4c6cc] bg-white p-[9px]">
      <ul className="w-[120px] shrink-0 overflow-hidden border border-[#a8a8a8] px-px text-black">
        {categories.map((name) => (
          <li key={name} className={`my-0.5 h-7 pl-0.5 leading-7 whitespace-nowrap ${name === '板' ? 'bg-[#b1cbee]' : ''}`}>
            {name}
          </li>
        ))}
      </ul>
      <div className="flex min-w-0 flex-1 flex-col">
        <div className="flex min-h-0 flex-1 overflow-hidden border border-[#bfbfbf]">
          <div className="min-w-0 flex-1 overflow-hidden">
            <table className="w-full table-fixed border-separate border-spacing-0">
              <colgroup>
                <col className="w-[22px]" />
                <col className="w-[351px]" />
                <col />
              </colgroup>
              <thead>
                <tr className="bg-[#f0f0f0] text-[#333]">
                  <th className="h-5 border-r border-b border-[#c4c4c4] p-0" aria-label="序号" />
                  <th className="border-r border-b border-[#c4c4c4] p-0 pt-0.5 font-normal">类型名称</th>
                  <th className="border border-t-0 border-[#62a4ea] bg-[#80bbfa] p-0 pt-0.5 font-bold text-white">设置值</th>
                </tr>
              </thead>
              <tbody>
                {rules.map((rule, i) => <RuleRow key={rule.name} rule={rule} index={i} />)}
              </tbody>
            </table>
          </div>
          <div className="w-3.5 shrink-0 px-[3px] pt-3.5">
            <div className="h-[345px] w-2 rounded-full bg-[#cacaca]" />
          </div>
        </div>
        <p className="pt-1.5 text-black">输入格式：级别 + 直径 @ 间距。</p>
      </div>
    </div>

    <footer className="flex shrink-0 gap-1.5 px-[11px] pt-[7px] pb-[11px]">
      <PlainButton>导入规则</PlainButton>
      <PlainButton>导出规则</PlainButton>
      <PlainButton>恢复默认值</PlainButton>
    </footer>
    <svg width="8" height="8" className="absolute right-[3px] bottom-[3px]" fill="#70737a">
      <path d="M6 0h2v2H6zM3 3h2v2H3zM6 3h2v2H6zM0 6h2v2H0zM3 6h2v2H3zM6 6h2v2H6z" />
    </svg>
  </section>
);

const RadioOption = ({ label, checked }: { label: string; checked?: boolean }) => (
  <label className="flex items-center gap-1">
    <input
      type="radio"
      name="distribution"
      defaultChecked={checked}
      className="h-3.5 w-3.5 appearance-none rounded-full border border-[#8e8e8e] bg-white checked:bg-[radial-gradient(circle,#3c8ce8_3px,#fff_4px)]"
    />
    {label}
  </label>
);

const RebarDialog = () => (
  <section
    role="dialog"
    aria-label="分布钢筋配置"
    className="absolute top-[278px] left-[929px] w-[352px] border border-t-0 border-[#bcc9d8] bg-[#efefef] pb-[11px] text-xs leading-[17px] text-black shadow-[3px_3px_3px_rgba(0,0,0,0.55)]"
  >
    <header className="flex h-[27px] items-center justify-between bg-[#2d7fe0] pr-[9px] pl-2 text-white">
      <h2>分布钢筋配置</h2>
      <button aria-label="关闭"><Cross /></button>
    </header>
    <div className="px-[11px]">
      <div className="flex h-[43px] items-center gap-[54px] pb-1">
        <RadioOption label="所有的分布筋相同" />
        <RadioOption label="同一板厚的分布筋相同" checked />
      </div>
      <div className="rounded-[3px] border border-[#b5b5b5] bg-white p-[9px]">
        <div className="h-[104px] border border-[#bfbfbf]">
          <table className="w-[202px] table-fixed border-separate border-spacing-0 leading-4">
            <thead>
              <tr>
                <th className="h-[18px] border border-t-0 border-[#62a4ea] bg-[#80bbfa] p-0 font-bold text-white">板厚(mm)</th>
                <th className="border-r border-b border-[#c4c4c4] bg-[#f0f0f0] p-0 font-normal text-[#444]">分布钢筋配置</th>
              </tr>
            </thead>
            <tbody>
              <tr>
                <td className="h-[21px] border-r-2 border-b-2 border-l border-[#777] p-0 pl-0.5">100</td>
                <td className="border-r border-b border-[#d4d4d4] p-0 pl-[3px]">A6@200</td>
              </tr>
              <tr>
                <td className="h-[21px] border-r border-b border-[#d4d4d4] p-0 pl-[3px]">120</td>
                <td className="border-r border-b border-[#d4d4d4] p-0 pl-[3px]">A8@200</td>
              </tr>
            </tbody>
          </table>
        </div>
      </div>
      <p className="pt-1.5 whitespace-nowrap">
        板厚输入格式：整数或整数 ~ 整数，如 150 或 150~200.
        <br />
        板厚范围不允许重叠，板厚 (0,5000] 整数
      </p>
      <div className="flex gap-[3px] pt-1.5">
        <PlainButton>添加</PlainButton>
        <PlainButton>删除</PlainButton>
        <PlainButton primary>确定</PlainButton>
        <PlainButton>取消</PlainButton>
      </div>
    </div>
  </section>
);

// Freehand pen marks drawn over both dialogs
const PenMarks = () => (
  <svg
    className="pointer-events-none absolute inset-0 h-full w-full"
    fill="none"
    stroke="#ff1f10"
    strokeWidth="3.200"
    strokeLinejoin="round"
    strokeLinecap="round"
  >
    <path d="M860 207.500L830 202.500L801 202L780 200L740 199.500Q735 199 734.500 203L733.500 217Q736 224 741 227Q746 231 753 231.500L780 236Q796 238 812 238Q826 238.500 837 236.500L858 228L870 221Q876 218 878 214V202Q878 199 874 198.500L862 196H834V198.500" />
    <path d="M1226.500 311.500H1172Q1158 315 1147 317L1127 323L1115 331Q1109 336 1109.500 344L1126 346L1147 349.500H1228L1253 343L1262 337L1266 330V322Q1262 317 1253 311.500Q1240 303 1226 301.500L1207 298L1172 296.500L1170 306" />
  </svg>
);

const App: React.FC = () => (
  <div className="relative flex h-screen w-full flex-col overflow-hidden bg-white font-['Noto_Sans','Noto_Sans_CJK_SC',sans-serif] text-xs">
    <Header />
    <Ribbon />
    <div className="flex h-[27px] shrink-0 items-center border-b border-[#8c8f92] bg-[#c9ccd0] pl-0.5">
      <ToolbarSelect label="楼层" value="基础层" />
      <ToolbarSelect label="构件类别" value="梁" />
      <ToolbarSelect label="构件类型" value="圈梁" />
    </div>
    <div className="flex min-h-0 flex-1">
      <NavTree />
      <div className="w-1 shrink-0 bg-white" />
      <ComponentPanels />
      <div className="w-1 shrink-0 bg-white" />
      <DrawingCanvas />
    </div>
    <SettingsDialog />
    <RebarDialog />
    <PenMarks />
  </div>
);

export default App;
